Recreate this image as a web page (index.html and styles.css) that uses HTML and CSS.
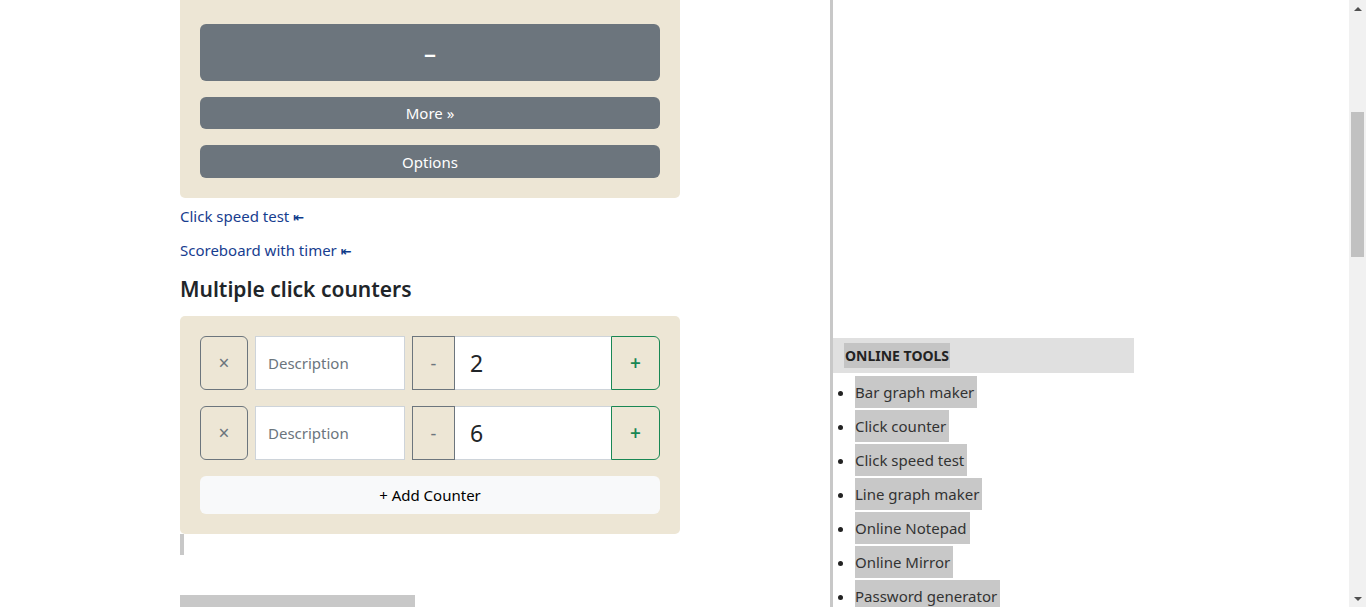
FILE: index.html
```html
<!DOCTYPE html>
<html lang="en">
<head>
<meta charset="utf-8">
<title>Click counter</title>
<link rel="stylesheet" href="styles.css">
</head>
<body>
<div class="page">
  <main class="main">
    <section class="panel panel-top">
      <button class="btn btn-big">–</button>
      <button class="btn btn-sm">More »</button>
      <button class="btn btn-sm">Options</button>
    </section>
    <p class="link-line first"><a href="#">Click speed test <span class="arr">⇤</span></a></p>
    <p class="link-line"><a href="#">Scoreboard with timer <span class="arr">⇤</span></a></p>
    <h2 class="title">Multiple click counters</h2>
    <section class="panel panel-counters">
      <div class="row">
        <button class="x-btn">×</button>
        <input class="desc" type="text" placeholder="Description">
        <div class="group">
          <button class="minus">-</button>
          <input class="num" type="text" value="2">
          <button class="plus">+</button>
        </div>
      </div>
      <div class="row">
        <button class="x-btn">×</button>
        <input class="desc" type="text" placeholder="Description">
        <div class="group">
          <button class="minus">-</button>
          <input class="num" type="text" value="6">
          <button class="plus">+</button>
        </div>
      </div>
      <button class="add">+ Add Counter</button>
    </section>
    <div class="quote-bar"></div>
    <div class="gray-block"></div>
  </main>
  <aside class="sidebar">
    <div class="side-head"><span>ONLINE TOOLS</span></div>
    <ul class="tools">
      <li><a href="#">Bar graph maker</a></li>
      <li><a href="#">Click counter</a></li>
      <li><a href="#">Click speed test</a></li>
      <li><a href="#">Line graph maker</a></li>
      <li><a href="#">Online Notepad</a></li>
      <li><a href="#">Online Mirror</a></li>
      <li><a href="#">Password generator</a></li>
    </ul>
  </aside>
</div>
<div class="scrollbar">
  <div class="sb-arrow up"></div>
  <div class="sb-track"><div class="sb-thumb"></div></div>
  <div class="sb-arrow down"></div>
</div>
</body>
</html>
```

FILE: styles.css
```css
* { box-sizing: border-box; }
html, body { margin: 0; height: 607px; overflow: hidden; }
body {
  display: flex;
  background: #fff;
  font-family: "Noto Sans", "Segoe UI", sans-serif;
  color: #212529;
  font-size: 15px;
}
.page {
  flex: 1;
  display: flex;
  align-items: flex-start;
  padding-left: 180px;
  height: 607px;
}
.main { width: 500px; margin-right: 150px; }

.panel { background: #ede6d5; border-radius: 5px; padding: 20px; }
.panel-top {
  border-radius: 0 0 5px 5px;
  padding-top: 24px;
  display: flex;
  flex-direction: column;
  gap: 16px;
}
.btn {
  border: 0;
  background: #6c757d;
  color: #fff;
  border-radius: 6px;
  font-family: inherit;
  font-size: 15px;
  padding: 0;
}
.btn-big { height: 57px; font-size: 24px; font-weight: 600; }
.btn-sm { height: 32px; }
.btn-sm:last-child { height: 33px; }

.link-line { margin: 8px 0 0; line-height: 24px; font-size: 15px; }
.link-line.first { margin-top: 6px; }
.link-line a { color: #173d8f; text-decoration: none; }
.arr { font-family: "DejaVu Sans", sans-serif; font-size: 13px; font-weight: 700; color: #0d3a8a; }

.title {
  margin: 11px 0 13px;
  font-size: 21px;
  line-height: 28px;
  font-weight: 600;
  color: #212529;
}

.panel-counters { display: flex; flex-direction: column; gap: 16px; }
.row { display: flex; gap: 7px; height: 54px; }
.x-btn {
  width: 48px;
  border: 1px solid #6c757d;
  border-radius: 6px;
  background: transparent;
  color: #6c757d;
  font-size: 19px;
  font-family: inherit;
  padding: 0;
}
.desc {
  width: 150px;
  border: 1px solid #ced4da;
  background: #fff;
  padding: 0 12px;
  font-family: inherit;
  font-size: 15px;
  color: #212529;
}
.desc::placeholder { color: #6c757d; }
.group { display: flex; flex: 1; }
.minus {
  width: 43px;
  border: 1px solid #6c757d;
  background: transparent;
  color: #6c757d;
  font-size: 18px;
  font-family: inherit;
  padding: 0;
}
.num {
  width: 156px;
  border: 1px solid #ced4da;
  border-left: 0;
  border-right: 0;
  background: #fff;
  padding: 0 15px;
  font-family: inherit;
  font-size: 23px;
  color: #212529;
}
.plus {
  width: 49px;
  border: 1px solid #198754;
  border-radius: 0 6px 6px 0;
  background: transparent;
  color: #198754;
  font-size: 19px;
  font-weight: 600;
  font-family: inherit;
  padding: 0;
}
.add {
  height: 38px;
  border: 0;
  border-radius: 6px;
  background: #f8f9fa;
  color: #000;
  font-family: inherit;
  font-size: 15px;
  padding: 0;
}

.quote-bar { width: 4px; height: 21px; background: #c8c8c8; }
.gray-block { width: 235px; height: 20px; margin-top: 40px; background: #c8c8c8; }

.sidebar {
  width: 304px;
  height: 607px;
  border-left: 3px solid #c8c8c8;
  padding-top: 338px;
}
.side-head {
  height: 35px;
  background: #e0e0e0;
  padding: 5px 0 0 11px;
}
.side-head span {
  display: inline-block;
  height: 25px;
  line-height: 25px;
  background: #c4c4c4;
  padding: 0 1px;
  font-weight: 700;
  font-size: 14px;
  color: #222;
}
.tools { margin: 0; padding: 1px 0 0 22px; list-style: disc; }
.tools li { margin-top: 2px; line-height: 32px; color: #222; }
.tools a {
  display: inline-block;
  background: #c8c8c8;
  color: #333;
  text-decoration: none;
  padding: 0 3px 0 0;
  font-size: 15px;
}

.scrollbar {
  width: 17px;
  height: 607px;
  background: #f1f1f1;
  display: flex;
  flex-direction: column;
}
.sb-arrow { height: 17px; display: flex; align-items: center; justify-content: center; }
.sb-arrow::before {
  content: "";
  border-left: 4px solid transparent;
  border-right: 4px solid transparent;
}
.sb-arrow.up::before { border-bottom: 4px solid #505050; }
.sb-arrow.down::before { border-top: 4px solid #505050; }
.sb-track { flex: 1; padding-top: 95px; display: flex; justify-content: center; }
.sb-thumb { width: 13px; height: 145px; background: #c1c1c1; }
```
